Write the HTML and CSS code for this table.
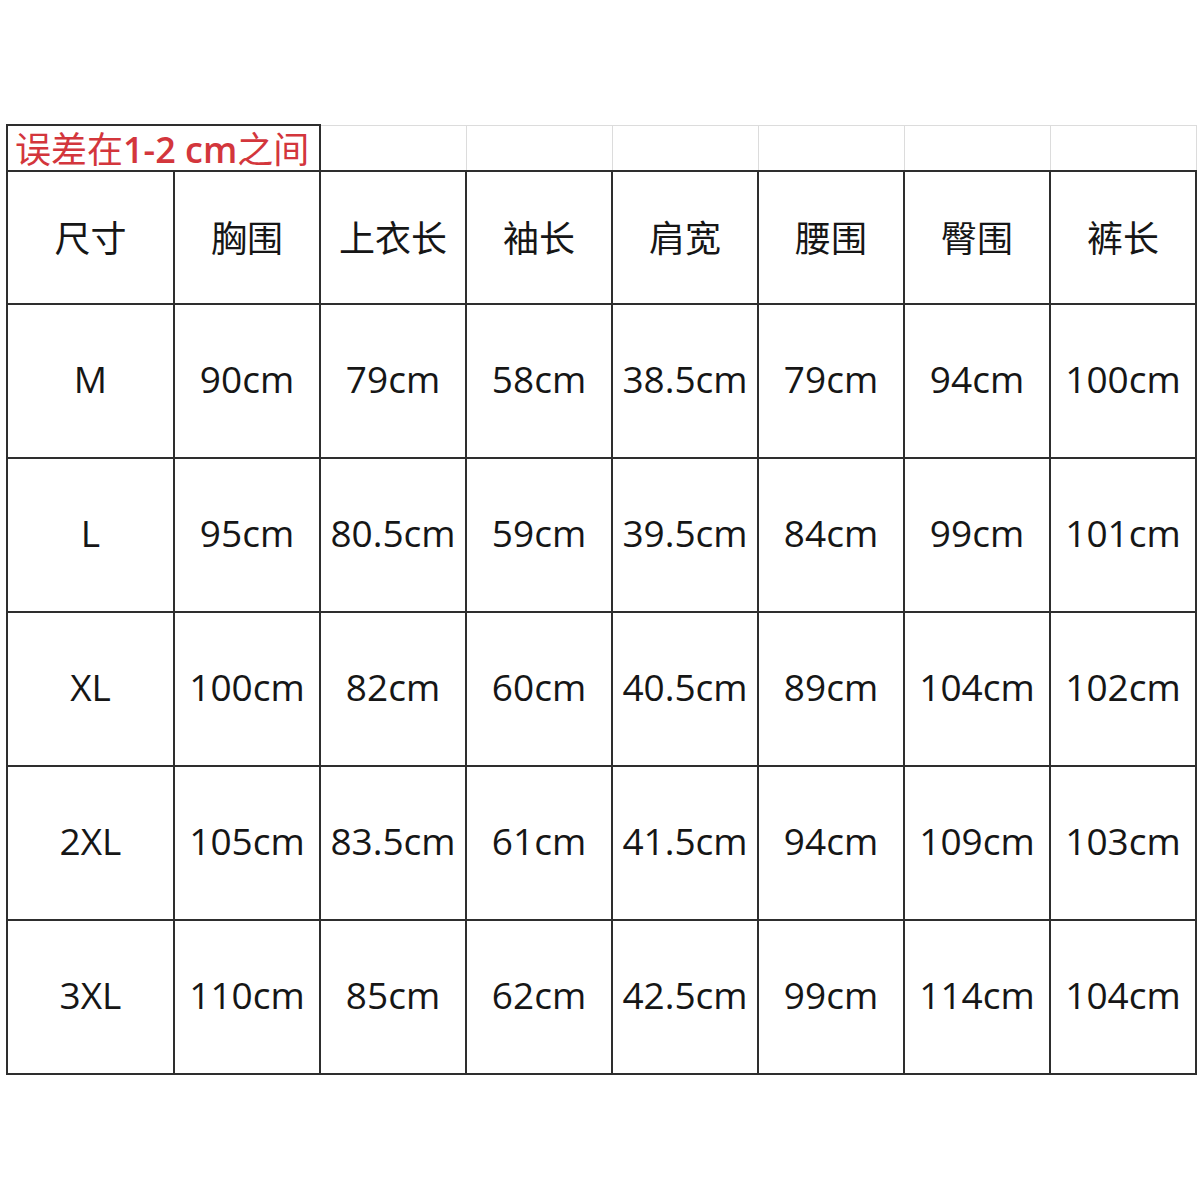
FILE: index.html
```html
<!DOCTYPE html>
<html lang="zh">
<head>
<meta charset="utf-8">
<link rel="stylesheet" href="styles.css">
</head>
<body>
<div class="page">
<table class="size-table">
  <colgroup>
    <col class="c-first">
    <col class="c"><col class="c"><col class="c"><col class="c"><col class="c"><col class="c"><col class="c">
  </colgroup>
  <tr class="note-row">
    <td class="note" colspan="2">误差在<span class="num">1-2 cm</span>之间</td>
    <td class="blank"></td><td class="blank"></td><td class="blank"></td><td class="blank"></td><td class="blank"></td><td class="blank"></td>
  </tr>
  <tr class="head-row">
    <td>尺寸</td><td>胸围</td><td>上衣长</td><td>袖长</td><td>肩宽</td><td>腰围</td><td>臀围</td><td>裤长</td>
  </tr>
  <tr class="data-row">
    <td>M</td><td>90cm</td><td>79cm</td><td>58cm</td><td>38.5cm</td><td>79cm</td><td>94cm</td><td>100cm</td>
  </tr>
  <tr class="data-row">
    <td>L</td><td>95cm</td><td>80.5cm</td><td>59cm</td><td>39.5cm</td><td>84cm</td><td>99cm</td><td>101cm</td>
  </tr>
  <tr class="data-row">
    <td>XL</td><td>100cm</td><td>82cm</td><td>60cm</td><td>40.5cm</td><td>89cm</td><td>104cm</td><td>102cm</td>
  </tr>
  <tr class="data-row">
    <td>2XL</td><td>105cm</td><td>83.5cm</td><td>61cm</td><td>41.5cm</td><td>94cm</td><td>109cm</td><td>103cm</td>
  </tr>
  <tr class="data-row">
    <td>3XL</td><td>110cm</td><td>85cm</td><td>62cm</td><td>42.5cm</td><td>99cm</td><td>114cm</td><td>104cm</td>
  </tr>
</table>
</div>
</body>
</html>
```

FILE: styles.css
```css
html, body {
  margin: 0;
  padding: 0;
  background: #ffffff;
}

.page {
  width: 1200px;
  height: 1200px;
  padding: 124px 0 0 6px;
  box-sizing: border-box;
}

.size-table {
  border-collapse: collapse;
  table-layout: fixed;
  width: 1191px;
  font-family: "Open Sans", "Noto Sans CJK SC", sans-serif;
  color: #161616;
}

.c-first { width: 167px; }
.c { width: 146px; }

.size-table td {
  border: 2px solid #2e2e2e;
  text-align: center;
  vertical-align: middle;
  padding: 0;
  white-space: nowrap;
  overflow: visible;
}

.note-row td {
  height: 44px;
}

.size-table td.note {
  text-align: left;
  vertical-align: bottom;
  padding: 0 0 0 7px;
  font-family: "Noto Sans CJK SC", sans-serif;
  font-size: 36px;
  line-height: 40px;
  color: #d3363c;
  border-bottom: 2px solid #2e2e2e;
}

.note .num {
  font-family: "Open Sans", sans-serif;
  font-weight: 600;
  font-size: 36px;
}

.size-table td.blank {
  border: 1px solid #dcdcdc;
  border-bottom: 2px solid #2e2e2e;
}

.head-row td {
  height: 127px;
  padding-bottom: 4px;
  font-family: "Noto Sans CJK SC", sans-serif;
  font-size: 36px;
}

.data-row td {
  height: 146px;
  padding-bottom: 6px;
  font-size: 37px;
}
```
